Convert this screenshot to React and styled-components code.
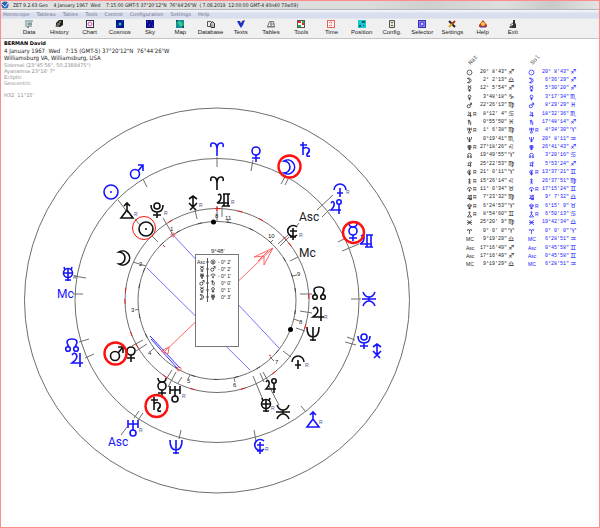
import React from "react";
import styled, { createGlobalStyle } from "styled-components";

const GlobalStyle = createGlobalStyle`
  * {
    box-sizing: border-box;
  }
  body {
    margin: 0;
    background: #ffffff;
    font-family: "Liberation Sans", Arial, sans-serif;
  }
`;

const Window = styled.div`
  min-height: 100vh;
  display: flex;
  flex-direction: column;
  border: 1px solid #ff8c8c;
  background: #ffffff;
`;

const TitleBar = styled.header`
  display: flex;
  align-items: center;
  gap: 4px;
  height: 9px;
  background: linear-gradient(100deg, #e2e2e2 0%, #dcdcdc 60%, #cfcfcf 72%, #dedede 84%, #c9c9c9 92%, #e4e4e4 100%);
  border-bottom: 1px solid #b4b4b4;
`;

const TitleText = styled.h1`
  margin: 0;
  font-family: "DejaVu Sans Condensed", "DejaVu Sans", sans-serif;
  font-size: 5px;
  line-height: 8px;
  font-weight: 400;
  color: #1c1c1c;
  white-space: pre;
`;

const MenuBar = styled.nav`
  display: flex;
  gap: 7px;
  height: 9px;
  padding-left: 2px;
  background: linear-gradient(#f8f9fd 0%, #d9deee 40%, #d9deee 90%, #eceef6 100%);
`;

const MenuItem = styled.button`
  border: 0;
  padding: 0;
  background: none;
  font-family: "DejaVu Sans", sans-serif;
  font-size: 5px;
  line-height: 9px;
  color: #70748a;
`;

const ToolBar = styled.div`
  height: 20px;
  padding-left: 13px;
  background: #f0f0f0;
  border-bottom: 1px solid #c4c4c4;
`;

const Tools = styled.div`
  display: grid;
  grid-template-columns: repeat(17, 1fr);
  max-width: 514px;
`;

const Tool = styled.button`
  display: flex;
  flex-direction: column;
  align-items: center;
  min-width: 0;
  border: 0;
  padding: 1px 0 0;
  background: none;
  font-family: "Liberation Sans", Arial, sans-serif;
  font-size: 6px;
  line-height: 8px;
  color: #222222;
`;

const ToolIcon = styled.svg`
  width: 8px;
  height: 8px;
`;

const Main = styled.main`
  flex: 1;
  display: flex;
  align-items: flex-start;
`;

const ChartPane = styled.section`
  flex: 1;
  min-width: 0;
`;

const Info = styled.div`
  height: 65px;
  padding: 1px 3px 0;
  font-family: "DejaVu Sans", sans-serif;
  font-size: 5px;
  line-height: 6px;
  white-space: pre;
`;

const Name = styled.h2`
  margin: 0;
  font-size: 5px;
  line-height: 7px;
  font-weight: 700;
  color: #000000;
`;

const Line = styled.p`
  margin: 0;
  font-family: "DejaVu Sans Condensed", "DejaVu Sans", sans-serif;
  font-size: 6px;
  line-height: 7px;
  color: #222222;
`;

const MutedLine = styled.p`
  margin: 0;
  color: #8e8e8e;
`;

const Settings = styled.div`
  padding-top: 1px;
`;

const Harmonic = styled(MutedLine)`
  padding-top: 6px;
`;

const Wheel = styled.svg`
  display: block;
  width: 100%;
  height: auto;
`;

const Positions = styled.aside`
  display: flex;
  gap: 12px;
  width: 136px;
  padding: 17px 0 0 3px;
`;

const Column = styled.section`
  width: 50px;
  color: ${(props) => props.$color};
`;

const ColumnTitle = styled.h3`
  width: 12px;
  margin: 0 0 4px 2px;
  font-family: "Liberation Mono", monospace;
  font-size: 6px;
  line-height: 8px;
  font-weight: 400;
  color: #444444;
  transform: rotate(-45deg);
`;

const PositionTable = styled.table`
  width: 100%;
  height: 201px;
  border-collapse: collapse;
  table-layout: fixed;
`;

const PlanetCell = styled.th`
  width: 11px;
  padding: 0;
  font-family: "Liberation Sans", sans-serif;
  font-size: 5px;
  line-height: 7px;
  font-weight: 400;
  text-align: left;
  white-space: nowrap;
`;

const DegreeCell = styled.td`
  padding: 0;
  font-family: "Liberation Mono", monospace;
  font-size: 5px;
  line-height: 7px;
  text-align: right;
  white-space: pre;
`;

const SignCell = styled.td`
  width: 9px;
  padding: 0 0 0 1px;
  font-family: "DejaVu Sans", sans-serif;
  font-size: 7px;
  line-height: 7px;
`;

const SmallGlyph = styled.svg`
  width: 7px;
  height: 7px;
  vertical-align: top;
  fill: none;
  stroke: currentColor;
  stroke-width: 2;
`;

const BLUE = "#1414ff";
const RED = "#ff1010";

// every glyph is drawn around 0,0
const GLYPHS = {
  sun: (
    <>
      <circle r="7" />
      <circle r="1" fill="currentColor" stroke="none" />
    </>
  ),
  moon: <path d="M-6-6A7 7 0 1 1-6 6A6 6 0 1 0-6-6Z" />,
  mercury: (
    <>
      <circle cy="-1" r="4" />
      <path d="M-4-9Q-4-5 0-5T4-9M0 3V9M-4 6H4" />
    </>
  ),
  venus: (
    <>
      <circle cy="-3" r="4" />
      <path d="M0 1V8M-4 4H4" />
    </>
  ),
  mars: (
    <>
      <circle cx="-2" cy="2" r="4.5" />
      <path d="M1-1L6-7M1-7H6V-1" />
    </>
  ),
  jupiter: <path d="M-5-5Q-3-8-1-6Q2-2-5 3H6M3-7V7" />,
  saturn: <path d="M-5-5H2M-2-8V5M-2-1Q1-4 4-1Q5 2 2 4Q1 7 5 6" />,
  uranus: (
    <>
      <circle cy="5" r="3" />
      <path d="M-5-8V0M5-8V0M-5-4H5M0-8V2" />
    </>
  ),
  neptune: <path d="M-6-7Q-6 3 0 3T6-7M0-7V7M-3 6H3" />,
  pluto: (
    <>
      <circle cy="-4" r="3" />
      <path d="M-6-5Q-6 2 0 2T6-5M0 2V8M-4 5H4" />
    </>
  ),
  mask: (
    <>
      <circle cy="-1" r="4.5" />
      <path d="M-4-7L-3-4M4-7L3-4M0-6V7M-5-1H5M-3 6H3" />
    </>
  ),
  node: (
    <>
      <circle cx="-4" cy="4" r="2.3" />
      <circle cx="4" cy="4" r="2.3" />
      <path d="M-3 2Q-8-6 0-6T3 2" />
    </>
  ),
  ceres: (
    <>
      <circle cx="3" cy="-5" r="2.2" />
      <path d="M-5-4Q-3-7-2-4Q-1-1-5 3H5M3-3V7" />
    </>
  ),
  proserpina: <path d="M4-5A5.5 5.5 0 1 0 4 3M0-4V8M-3-1H4M-3 5H3" />,
  arrowX: <path d="M0-7V4M-4-4L0-7L4-4M-4 0L0 4L4 0M0 4L-3 7M0 4L3 7" />,
  dome: <path d="M-6 0A6 6 0 0 1 6 0M0-2V7M-3 3H3" />,
  twin: <path d="M-5-5Q-2-7-2-3Q-2 1-6 3H6M0-6H7M1-6V6M5-6V6M-1 6H7" />,
  triangle: <path d="M0-1L-6 7H6ZM0-1V-8M-3-5L0-8L3-5" />,
  bows: <path d="M-6-7Q-4-2 0-2T6-7M-6 7Q-4 2 0 2T6 7M-7 0H7M0-2V2" />,
  aries: <path d="M-6-2Q-7-6-4-6Q0-6 0 0V7M6-2Q7-6 4-6Q0-6 0 0" />,
  cross: (
    <>
      <circle r="6" />
      <path d="M0-3V6M-3 0H3" />
    </>
  ),
};

const SIGNS = {
  ari: "♈",
  tau: "♉",
  gem: "♊",
  can: "♋",
  leo: "♌",
  vir: "♍",
  lib: "♎",
  sco: "♏",
  sag: "♐",
  cap: "♑",
  aqu: "♒",
  pis: "♓",
};

const NATAL = [
  ["sun", "", "20° 8'43\"", "sag"],
  ["moon", "", "2° 2'13\"", "lib"],
  ["mercury", "", "12° 5'54\"", "sag"],
  ["venus", "", "3°48'18\"", "cap"],
  ["mars", "", "22°26'13\"", "vir"],
  ["jupiter", "R", "8°12' 4\"", "can"],
  ["saturn", "", "0°55'50\"", "pis"],
  ["uranus", "R", "1° 6'38\"", "vir"],
  ["neptune", "", "0°19'41\"", "sco"],
  ["mask", "R", "27°18'26\"", "leo"],
  ["node", "", "19°49'55\"", "ari"],
  ["ceres", "", "25°22'53\"", "vir"],
  ["proserpina", "R", "21° 0'11\"", "ari"],
  ["arrowX", "R", "15°26'14\"", "leo"],
  ["dome", "R", "11° 0'34\"", "tau"],
  ["twin", "R", "7°23'32\"", "vir"],
  ["pluto", "R", "6°24'53\"", "ari"],
  ["triangle", "R", "8°54'60\"", "gem"],
  ["bows", "", "25°20' 9\"", "vir"],
  ["aries", "", "0° 0' 0\"", "ari"],
  ["MC", "", "9°19'29\"", "lib"],
  ["Asc", "", "17°16'49\"", "sag"],
  ["Asc", "", "17°16'49\"", "sag"],
  ["MC", "", "9°19'29\"", "lib"],
];

const SOLAR = [
  ["sun", "", "20° 8'43\"", "sag"],
  ["moon", "", "6°36'29\"", "sag"],
  ["mercury", "", "5°30'20\"", "sag"],
  ["venus", "", "3°17'34\"", "sco"],
  ["mars", "", "8°29'29\"", "pis"],
  ["jupiter", "", "18°32'36\"", "sco"],
  ["saturn", "", "17°48'14\"", "sag"],
  ["uranus", "R", "4°34'30\"", "ari"],
  ["neptune", "", "20° 8'11\"", "aqu"],
  ["mask", "", "26°41'43\"", "sag"],
  ["node", "", "3°20'16\"", "can"],
  ["ceres", "", "5°53'24\"", "sag"],
  ["proserpina", "R", "13°37'21\"", "gem"],
  ["arrowX", "", "26°37'51\"", "vir"],
  ["dome", "R", "17°15'24\"", "gem"],
  ["twin", "", "9° 7'32\"", "lib"],
  ["pluto", "R", "6°15' 9\"", "tau"],
  ["triangle", "R", "6°50'13\"", "can"],
  ["bows", "", "19°42'34\"", "lib"],
  ["aries", "", "0° 0' 0\"", "ari"],
  ["MC", "", "6°28'51\"", "aqu"],
  ["Asc", "", "0°45'58\"", "gem"],
  ["Asc", "", "0°45'58\"", "gem"],
  ["MC", "", "6°28'51\"", "aqu"],
];

const MENU = ["Horoscope", "Tableau", "Tables", "Tools", "Control", "Configuration", "Settings", "Help"];

const TOOLS = [
  [
    "Data",
    <>
      <path d="M0 1H8M1 2V7M4 2V7M6 2V7M2 4H7" stroke="#5d8484" />
      <path d="M2 7H4" stroke="#333" />
    </>,
  ],
  [
    "History",
    <>
      <path d="M1 3L4 0H8V5L5 7H1Z" fill="#222" />
      <path d="M2 4H5M4 2H6" stroke="#c9c27a" />
      <path d="M0 6H4" stroke="#999" />
    </>,
  ],
  [
    "Chart",
    <>
      <rect x="0.5" y="0.5" width="7" height="7" fill="#fff" stroke="#333" />
      <circle cx="4" cy="4" r="2" fill="none" stroke="#d048c0" />
    </>,
  ],
  [
    "Cosmos",
    <>
      <rect width="8" height="8" fill="#06168c" />
      <circle cx="4" cy="4" r="1.5" fill="#28c8b0" />
      <path d="M1 6H2M6 1H7" stroke="#3a7de8" />
    </>,
  ],
  [
    "Sky",
    <>
      <rect width="8" height="8" fill="#0a0a8c" />
      <path d="M1 2H2M5 1H6M3 5H4M6 6H7" stroke="#5a6ae0" />
    </>,
  ],
  [
    "Map",
    <>
      <rect width="8" height="8" fill="#178c9c" />
      <path d="M1 2L4 1L7 4L5 7L3 5Z" fill="#30d080" />
      <path d="M0 1H2M6 7H8" stroke="#222" />
    </>,
  ],
  [
    "Database",
    <>
      <path d="M0.5 1.5H4L5.5 3V6.5H0.5Z" fill="#eee" stroke="#555" />
      <path d="M3.5 3.5L5.5 1.5L7.5 3.5V7.5H4Z" fill="#bbb" stroke="#333" />
    </>,
  ],
  [
    "Texts",
    <>
      <path d="M0 1L3 1L4 3L5 1L8 0L6 5L4 8L2 5Z" fill="#1830c8" />
      <path d="M3 1L5 1L4 3Z" fill="#f0d850" />
    </>,
  ],
  [
    "Tables",
    <path d="M2.5 1.5H6.5L7.5 6.5H0.5L2.5 1.5M3 4H7M0 7H8M4 2V6" fill="#eee" stroke="#777" />,
  ],
  [
    "Tools",
    <>
      <rect x="0.5" y="0.5" width="7" height="7" fill="#fff" stroke="#555" />
      <path d="M1 2H4M5 4H7" stroke="#e03028" strokeWidth="2" />
      <path d="M5 2H7M1 6H4" stroke="#28b048" strokeWidth="2" />
    </>,
  ],
  [
    "Time",
    <>
      <rect x="0.5" y="0.5" width="7" height="7" fill="#fff" stroke="#e86058" />
      <path d="M2 2.5H6M2 5.5H6" stroke="#e86058" strokeDasharray="1 1" />
      <path d="M4 1V7" stroke="#f0a8a0" />
    </>,
  ],
  [
    "Position",
    <>
      <rect width="8" height="8" fill="#18c8d0" />
      <path d="M4 1H7V3H4ZM1 5H3V7H1ZM5 5H6V6H5Z" fill="#135a60" />
    </>,
  ],
  [
    "Config.",
    <>
      <path d="M1.5 0.5H6.5V7.5H1.5Z" fill="#e4e2c8" stroke="#555" />
      <path d="M3 2.5H5M3 5.5H5" stroke="#666" />
    </>,
  ],
  [
    "Selector",
    <>
      <rect x="0.5" y="0.5" width="7" height="7" fill="#8c84e8" stroke="#3a30b8" />
      <circle cx="4" cy="4" r="2" fill="#c8c4ff" stroke="#3a30d8" />
    </>,
  ],
  [
    "Settings",
    <>
      <path d="M1 1L7 7" stroke="#222" strokeWidth="2" />
      <path d="M7 1L4 4" stroke="#b03818" strokeWidth="2" />
      <path d="M4 4L1 7" stroke="#d8a820" strokeWidth="2" />
    </>,
  ],
  [
    "Help",
    <>
      <path d="M4 0L8 5V7H0V5Z" fill="#d83020" />
      <circle cx="4" cy="4" r="2" fill="#f4d038" />
      <path d="M1 7H7" stroke="#3040b0" />
    </>,
  ],
  [
    "Exit",
    <>
      <path d="M4 0H6V3L7 4V8H1V6L4 5Z" fill="#333" />
      <path d="M1 5L4 3M0 7H3" stroke="#667" />
    </>,
  ],
];

// glyph, x, y
const OUTER = [
  ["aries", 217, 149],
  ["venus", 256, 154],
  ["moon", 290, 167],
  ["saturn", 305, 150],
  ["dome", 340, 190],
  ["ceres", 336, 207],
  ["mercury", 353, 232],
  ["twin", 366, 241],
  ["bows", 369, 299],
  ["pluto", 364, 341],
  ["arrowX", 377, 351],
  ["triangle", 313, 420],
  ["proserpina", 260, 446],
  ["neptune", 176, 447],
  ["uranus", 133, 428],
  ["jupiter", 77, 360],
  ["node", 72, 345],
  ["mask", 68, 274],
  ["sun", 111, 192],
  ["mars", 137, 172],
];

const INNER = [
  ["aries", 217, 183],
  ["twin", 223, 200],
  ["arrowX", 193, 203],
  ["pluto", 157, 210],
  ["triangle", 127, 211],
  ["sun", 146, 229],
  ["moon", 125, 258],
  ["mars", 117, 354],
  ["venus", 131, 354],
  ["mercury", 162, 387],
  ["uranus", 175, 394],
  ["saturn", 156, 405],
  ["ceres", 271, 386],
  ["mask", 266, 405],
  ["bows", 283, 412],
  ["dome", 298, 362],
  ["neptune", 313, 334],
  ["jupiter", 318, 314],
  ["node", 319, 293],
  ["proserpina", 293, 232],
];

const RETRO = [
  [346, 194],
  [319, 424],
  [265, 451],
  [139, 432],
  [73, 279],
  [164, 215],
  [134, 216],
  [199, 207],
  [231, 204],
  [299, 237],
  [324, 319],
  [305, 367],
  [271, 410],
  [182, 398],
];

const HOUSES = [
  ["1", 170, 231],
  ["2", 139, 266],
  ["3", 131, 312],
  ["4", 148, 355],
  ["5", 187, 383],
  ["6", 233, 387],
  ["7", 275, 364],
  ["8", 299, 324],
  ["9", 297, 276],
  ["10", 268, 238],
  ["11", 225, 220],
  ["8", 215, 218],
];

const TICKS =
  "M217 157V167M253 160L251 171M286 175L281 184M289 177L285 185M333 195L317 210M330 209L322 217" +
  "M338 242L346 238M342 251L359 244M351 299H361M347 337L355 340M345 342L356 345M301 406L306 412" +
  "M254 430L256 441M181 430L179 439M121 435L127 427M139 411L134 418M143 413L138 420" +
  "M94 354L85 358M89 339L79 342M73 294H83M74 276L86 278M118 200L128 213M143 179L147 187" +
  "M222 206V217M217 207V222M228 219V223M195 210L197 219M163 218L173 235M135 219L140 225" +
  "M152 236L158 242M133 262L146 266M132 346L143 340M136 351L147 344M167 378L172 370" +
  "M168 387L176 372M178 383L182 377M260 373L264 382M263 372L268 381M253 376L263 400" +
  "M269 386L279 405M283 351L291 357M296 328L305 331M300 311L312 313M300 294H312" +
  "M290 261L298 257M278 244L288 235M280 246L289 237M296 227L299 223M292 276L297 275" +
  "M294 319L299 321M270 357L274 361M234 378L235 382M190 375L188 379M154 348L151 351M139 309L135 310" +
  "M270 243L273 240";

function polar(r, deg) {
  const a = (deg * Math.PI) / 180;
  return [217 + r * Math.cos(a), 300.5 - r * Math.sin(a)];
}

function arc(r, from, to) {
  const [x1, y1] = polar(r, from);
  const [x2, y2] = polar(r, to);
  return `M${x1} ${y1}A${r} ${r} 0 0 0 ${x2} ${y2}`;
}

const RED_ARCS = [36, 41, 60, 74, 88, 119, 172, 179, 200, 208, 234, 253, 285, 307, 342, 1].map((d) => arc(92, d, d + 3));
const DARK_ARCS = [6, 17, 30, 46, 63, 80, 101, 118, 133, 156, 168, 190, 205, 221, 238, 251, 268, 283, 300, 318, 350].map(
  (d) => arc(79, d, d + 3)
);

function Glyph({ name, x, y, color }) {
  return (
    <g transform={`translate(${x} ${y})`} color={color} stroke={color} fill="none" strokeWidth="1.6">
      {GLYPHS[name]}
    </g>
  );
}

const ASPECTS = [
  ["Asc", "cross", "- 0° 2'"],
  ["mercury", "mars", "- 0° 2'"],
  ["mask", "dome", "- 0° 1'"],
  ["mars", "saturn", "0° 0'"],
  ["mercury", "venus", "0° 1'"],
  ["moon", "mask", "0° 3'"],
];

const ChartText = styled.text`
  font-family: "Liberation Sans", Arial, sans-serif;
  font-size: ${(props) => props.$size}px;
  fill: ${(props) => props.$color || "#222222"};
`;

const AxisText = styled(ChartText)`
  font-family: Roboto, sans-serif;
`;

function MiniGlyph({ name, x, y }) {
  if (name === "Asc") {
    return (
      <ChartText $size={5} x={x - 5} y={y + 2}>
        Asc
      </ChartText>
    );
  }
  return (
    <g transform={`translate(${x} ${y}) scale(0.35)`} color="#222" stroke="#222" fill="none" strokeWidth="2">
      {GLYPHS[name]}
    </g>
  );
}

function AspectBox() {
  return (
    <g>
      <ChartText $size={6} x="211" y="253">
        9°48'
      </ChartText>
      <rect x="195.5" y="254.5" width="43" height="92" fill="#fff" stroke="#777" />
      <path d="M207.5 258V302" stroke="#555" />
      {ASPECTS.map(([a, b, orb], i) => (
        <g key={i}>
          <MiniGlyph name={a} x={202} y={262 + i * 7} />
          <path d={`M206 ${262 + i * 7}H209`} stroke="#555" />
          <MiniGlyph name={b} x={213} y={262 + i * 7} />
          <ChartText $size={5} x="231" y={264 + i * 7} textAnchor="end">
            {orb}
          </ChartText>
        </g>
      ))}
    </g>
  );
}

function Chart() {
  return (
    <Wheel viewBox="1 104 462 400" role="img" aria-label="Natal and solar wheel">
      <g fill="none" stroke="#6e6e6e">
        <circle cx="217" cy="300.5" r="192.5" />
        <circle cx="217" cy="300.5" r="142" />
        <circle cx="217" cy="300.5" r="92" />
        <circle cx="217" cy="300.5" r="79" />
        <path d={TICKS} />
        <path d={DARK_ARCS.join("")} stroke="#444" />
        <path d={RED_ARCS.join("")} stroke={RED} />
      </g>
      <g fill="none" stroke="#7474ff">
        <path d="M173 235L279 348" />
        <path d="M147 268L250 370" />
        <path d="M150 336L180 368M151 339L178 369" stroke="#3030ff" />
      </g>
      <g fill="none" stroke="#ff6464">
        <path d="M163 353L273 248L254 257L264 256V265L273 248M258 261L268 251" />
        <path d="M161 351L169 347L168 354Z" />
        <circle cx="173" cy="235" r="2" />
        <circle cx="179" cy="369" r="2" />
        <path d="M163 245L165 247M269 355L271 356M215 208.5H220M217 206V211" stroke={RED} />
      </g>
      <circle cx="213.5" cy="222" r="2.5" />
      <circle cx="290.5" cy="329.5" r="2.5" />
      <AspectBox />
      {HOUSES.map(([n, x, y]) => (
        <ChartText key={n + x} $size={6} x={x} y={y}>
          {n}
        </ChartText>
      ))}
      {RETRO.map(([x, y]) => (
        <ChartText key={`${x}-${y}`} $size={5} $color="#4a5a8a" x={x} y={y}>
          R
        </ChartText>
      ))}
      {OUTER.map(([name, x, y]) => (
        <Glyph key={name} name={name} x={x} y={y} color={BLUE} />
      ))}
      {INNER.map(([name, x, y]) => (
        <Glyph key={name} name={name} x={x} y={y} color="#111111" />
      ))}
      <AxisText $size={12} $color={BLUE} x="57" y="298">
        Mc
      </AxisText>
      <AxisText $size={12} $color={BLUE} x="108" y="446">
        Asc
      </AxisText>
      <AxisText $size={12} x="299" y="221">
        Asc
      </AxisText>
      <AxisText $size={12} x="299" y="257">
        Mc
      </AxisText>
      <g fill="none" stroke={RED} strokeWidth="2.4">
        <circle cx="289.5" cy="166.5" r="11" />
        <circle cx="353.5" cy="232.5" r="10.5" />
        <circle cx="115.5" cy="353.5" r="11" />
        <circle cx="156.5" cy="406" r="11" />
        <circle cx="144" cy="228" r="11.5" strokeWidth="1" />
      </g>
    </Wheel>
  );
}

function PositionColumn({ title, rows, color }) {
  return (
    <Column $color={color}>
      <ColumnTitle>{title}</ColumnTitle>
      <PositionTable>
        <tbody>
          {rows.map(([planet, retro, degree, sign], i) => (
            <tr key={i}>
              <PlanetCell scope="row">
                {GLYPHS[planet] ? (
                  <SmallGlyph viewBox="-10 -10 20 20" aria-label={planet}>
                    {GLYPHS[planet]}
                  </SmallGlyph>
                ) : (
                  planet
                )}
                {retro}
              </PlanetCell>
              <DegreeCell>{degree}</DegreeCell>
              <SignCell>{SIGNS[sign] + "\uFE0E"}</SignCell>
            </tr>
          ))}
        </tbody>
      </PositionTable>
    </Column>
  );
}

export default function App() {
  return (
    <>
      <GlobalStyle />
      <Window>
        <TitleBar>
          <ToolIcon viewBox="0 0 8 8">
            <circle cx="4" cy="4" r="3.5" fill="#2a66b8" />
            <path d="M1 3L4 6L7 2" fill="none" stroke="#d8e8ff" />
          </ToolIcon>
          <TitleText>
            {"ZET 9.2.63 Geo    4 January 1967  Wed    7:15:00 GMT-5 37°20'12\"N  76°44'26\"W  ( 7.08.2019  12:00:00 GMT-4 40n40 73w59)"}
          </TitleText>
        </TitleBar>
        <MenuBar>
          {MENU.map((item) => (
            <MenuItem key={item}>{item}</MenuItem>
          ))}
        </MenuBar>
        <ToolBar>
          <Tools>
            {TOOLS.map(([label, icon]) => (
              <Tool key={label}>
                <ToolIcon viewBox="0 0 8 8" fill="none">
                  {icon}
                </ToolIcon>
                {label}
              </Tool>
            ))}
          </Tools>
        </ToolBar>
        <Main>
          <ChartPane>
            <Info>
              <Name>BERMAN David</Name>
              <Line>{"4 January 1967  Wed   7:15 (GMT-5) 37°20'12\"N  76°44'26\"W"}</Line>
              <Line>Williamsburg VA, Williamsburg, USA</Line>
              <Settings>
                <MutedLine>{"Sidereal (23°45'56\", 50.2388475\")"}</MutedLine>
                <MutedLine>{"Ayanamsa 23°18' 7\""}</MutedLine>
                <MutedLine>Ecliptic</MutedLine>
                <MutedLine>Geocentric</MutedLine>
                <Harmonic>{"H32  11°15'"}</Harmonic>
              </Settings>
            </Info>
            <Chart />
          </ChartPane>
          <Positions>
            <PositionColumn title="Nat" rows={NATAL} color="#222222" />
            <PositionColumn title="Sol" rows={SOLAR} color={BLUE} />
          </Positions>
        </Main>
      </Window>
    </>
  );
}
